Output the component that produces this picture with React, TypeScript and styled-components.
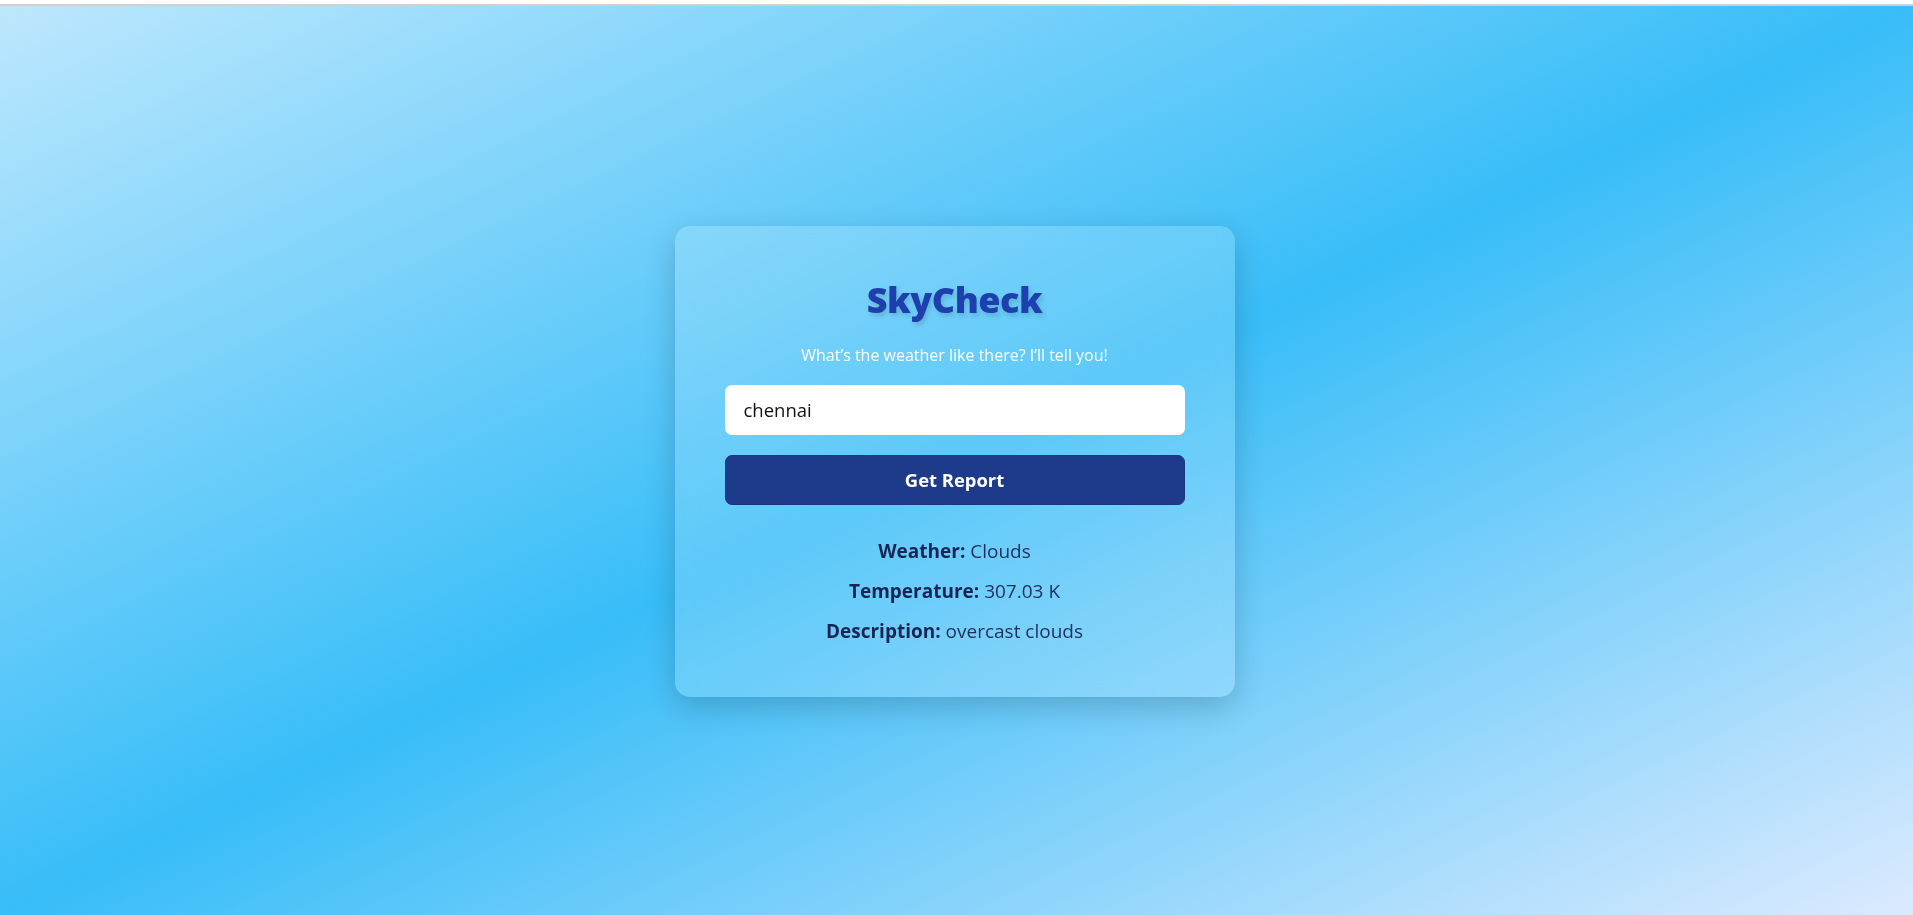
import styled, { createGlobalStyle } from "styled-components";
import { useState } from "react";

const GlobalStyle = createGlobalStyle`
    html {
        background: #ffffff;
        padding-top: 4px;
    }

    body {
        margin: 0;
        border-top: 2px solid #d0d0d0;
        font-family: "Segoe UI", "Open Sans", "Noto Sans", sans-serif;
    }

    * {
        box-sizing: border-box;
    }
`;

const Page = styled.div`
    min-height: calc(100vh - 6px);
    display: flex;
    align-items: center;
    justify-content: center;
    background: linear-gradient(to bottom right, #bde7fd 0%, #38bdf8 50%, #dbeafe 100%);
`;

const Card = styled.div`
    width: 560px;
    padding: 51px 50px 53px;
    margin: 2px 0 0 -4px;
    border-radius: 15px;
    background: rgba(255, 255, 255, 0.18);
    backdrop-filter: blur(10px);
    box-shadow: 0 10px 30px rgba(0, 0, 0, 0.18);
    text-align: center;
`;

const Title = styled.h1`
    margin: 0;
    font-size: 36px;
    font-weight: 800;
    letter-spacing: -0.5px;
    line-height: 1.3;
    color: #1e40af;
    text-shadow: 2px 3px 5px rgba(0, 0, 0, 0.15);
`;

const Subtitle = styled.p`
    margin: 20px 0 18px;
    font-size: 16px;
    color: #ffffff;
    line-height: 1.4;
`;

const CityInput = styled.input`
    display: block;
    width: 100%;
    height: 50px;
    padding: 0 19px;
    border: none;
    border-radius: 7px;
    background: #ffffff;
    font-family: inherit;
    font-size: 18.5px;
    color: #111111;
    outline: none;
`;

const ReportButton = styled.button`
    display: block;
    width: 100%;
    height: 50px;
    margin-top: 20px;
    border: 1px solid #1b357f;
    border-radius: 7px;
    background: #1e3a8a;
    color: #ffffff;
    font-family: inherit;
    font-size: 18.4px;
    font-weight: 700;
    cursor: pointer;
`;

const Results = styled.div`
    margin-top: 34px;
    display: flex;
    flex-direction: column;
    gap: 15px;
`;

const ResultLine = styled.p`
    margin: 0;
    font-size: 19px;
    line-height: 25px;
    color: #1e2f5e;

    strong {
        font-weight: 700;
        color: #172554;
    }
`;

const App = () => {
    const [city, setCity] = useState("chennai");

    const report = [
        { label: "Weather", value: "Clouds" },
        { label: "Temperature", value: "307.03 K" },
        { label: "Description", value: "overcast clouds" }
    ];

    return (
        <>
            <GlobalStyle />
            <Page>
                <Card>
                    <Title>SkyCheck</Title>
                    <Subtitle>What’s the weather like there? I’ll tell you!</Subtitle>
                    <CityInput value={city} onChange={(e) => setCity(e.target.value)} />
                    <ReportButton>Get Report</ReportButton>
                    <Results>
                        {report.map((item) => (
                            <ResultLine key={item.label}>
                                <strong>{item.label}:</strong> {item.value}
                            </ResultLine>
                        ))}
                    </Results>
                </Card>
            </Page>
        </>
    );
};

export default App;
